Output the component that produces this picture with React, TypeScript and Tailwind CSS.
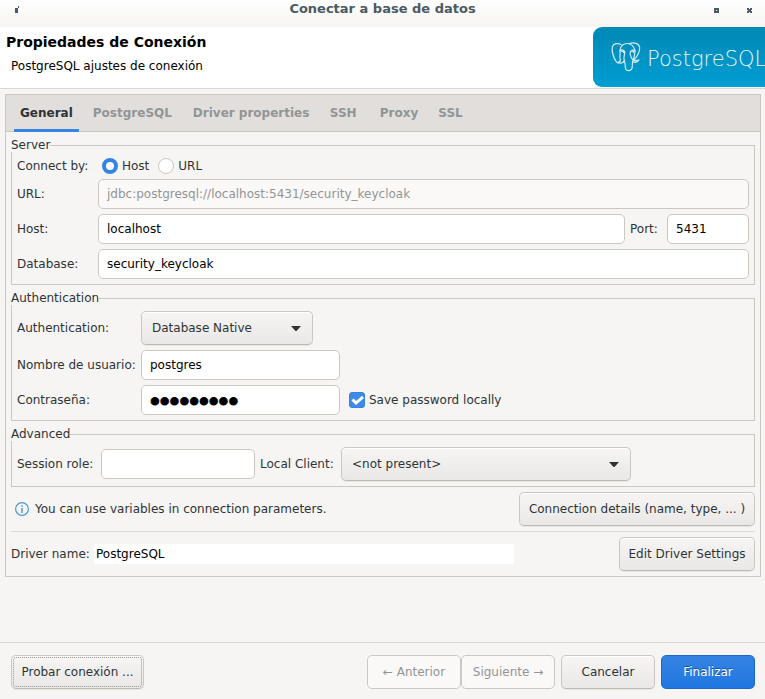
import React from "react";

const inputClass =
  "h-[30px] w-full min-w-0 rounded-[5px] border border-[#cdc7c2] bg-white px-2 text-black outline-none disabled:bg-[#faf9f8] disabled:text-[#929595]";

const buttonClass =
  "h-[34px] shrink-0 rounded-[5px] border border-[#cdc7c2] border-b-[#bfb8b1] bg-linear-to-b from-[#f6f5f4] to-[#e9e8e6] text-center whitespace-nowrap shadow-[inset_0_1px_#ffffff,0_1px_1px_#00000010]";

const disabledButtonClass =
  "h-[34px] w-[94px] rounded-[5px] border border-[#cdc7c2] bg-[#faf9f8] text-[#929595] whitespace-nowrap";

function Group({ title, children }: { title: string; children: React.ReactNode }) {
  return (
    <fieldset className="min-w-0 border border-[#cdc7c2] px-[5px] pb-[5px]">
      <legend className="-ml-[6px] h-[14px] leading-[14px]">{title}</legend>
      {children}
    </fieldset>
  );
}

function Dropdown({ id, value, className }: { id: string; value: string; className: string }) {
  return (
    <div className={"relative " + className}>
      <select id={id} className={buttonClass + " w-full appearance-none pr-8 pl-[10px] text-left"}>
        <option>{value}</option>
      </select>
      <svg className="pointer-events-none absolute top-[15px] right-3 h-[5px] w-[10px]" viewBox="0 0 10 5">
        <path d="M0 0h10L5.500 5h-1z" fill="#2e3436" />
      </svg>
    </div>
  );
}

function Elephant() {
  return (
    <svg
      className="h-[30px] w-[30px] shrink-0"
      viewBox="0 0 30 30"
      fill="none"
      stroke="#d3edf7"
      strokeWidth="1.2"
      strokeLinecap="round"
      strokeLinejoin="round"
    >
      <path d="M10 2.500C7 1 2.500 1 1.300 5C.5 9 2.500 16 5.500 20C6.500 21.500 8 20.800 9.500 18.500" />
      <path d="M9.500 18.500C8 16 9.500 12 9 8.500C9 4 12.500 1.300 16.500 1.500C20.500 1.800 23 5 24 8.500C24.300 11 23 15 22.500 18" />
      <path d="M18 1.700C21 .5 27 .3 28.500 4.500C29.200 8.500 26 14.500 23 18C24 19 26 18.800 28 17.800C27 20 24 21 21.500 19.800" />
      <path d="M9.500 18.500C8.500 20 6.500 20 7 20.500C9 21.800 12.500 21.300 13.300 18.500" />
      <path d="M9.200 8.500C11 7.200 13.500 8 13.700 10C14 13 12 15 13.300 18.500C14.500 21 13.800 24.500 14.800 27C16 29.500 20.500 29.300 21.200 25.500C21.500 23 21 20 22 18C20 15.500 18.500 12 19.500 9.500C20.500 8 22.500 7.800 24 8.500" />
      <path d="M10.800 9.200h1.800v1.200M20.800 9h1.700v1.200" strokeWidth="1.500" />
    </svg>
  );
}

const tabs = [
  { name: "General", size: "" },
  { name: "PostgreSQL", size: "min-w-[92px]" },
  { name: "Driver properties", size: "min-w-[129px]" },
  { name: "SSH", size: "min-w-[42px]" },
  { name: "Proxy", size: "" },
  { name: "SSL", size: "" },
];

export default function App() {
  return (
    <div className="flex min-h-screen flex-col overflow-hidden bg-[#f6f5f4] font-['DejaVu_Sans',sans-serif] text-[12px] leading-[14px] text-[#2e3436]">
      <header className="grid h-[27px] grid-cols-[1fr_auto_1fr] bg-linear-to-b from-[#fefefe] to-[#f5f4f2]">
        <button aria-label="Menú" className="flex pt-[6px] pl-[15px]">
          <svg className="h-[8px] w-[5px]" viewBox="0 0 5 8" fill="#4b5a63">
            <path d="M0 2h3v5H0zM3 0h1v2H3z" />
          </svg>
        </button>
        <h1 className="pt-px text-[13px] leading-4 font-bold text-[#4b5a63]">Conectar a base de datos</h1>
        <div className="flex items-start justify-end gap-7 pt-[8px] pr-[13px]">
          <button aria-label="Maximizar">
            <svg className="h-[5px] w-[5px]" viewBox="0 0 5 5">
              <path d="M0 0h5v5H0zM2 2v1h1V2z" fill="#4b5a63" fillRule="evenodd" />
            </svg>
          </button>
          <button aria-label="Cerrar">
            <svg className="h-[5px] w-[5px]" viewBox="0 0 5 5">
              <path d="M0 0h2v1h1V0h2v2H4v1h1v2H3V4H2v1H0V3h1V2H0z" fill="#4b5a63" />
            </svg>
          </button>
        </div>
      </header>

      <section className="flex h-[62px] justify-between border-b border-[#d9d8d7] bg-white text-black">
        <div className="pt-[7px] pl-[6px]">
          <h2 className="text-[14px] leading-4 font-bold">Propiedades de Conexión</h2>
          <p className="mt-[9px] pl-[5px]">PostgreSQL ajustes de conexión</p>
        </div>
        <div className="flex h-[60px] w-[172px] items-center gap-[6px] overflow-hidden rounded-l-[9px] bg-linear-to-b from-[#0089b6] to-[#009dd2] pl-[18px]">
          <Elephant />
          <span className="pt-1 text-[21px] leading-6 font-extralight text-[#e6f6fb]">PostgreSQL</span>
        </div>
      </section>

      <main className="mt-[5px] mr-1 ml-[5px] border border-[#cdc7c2]">
        <nav role="tablist" className="flex h-[37px] gap-2 border-b border-[#cdc7c2] bg-[#e1dedb] px-2">
          {tabs.map((tab, i) => (
            <button
              key={tab.name}
              role="tab"
              aria-selected={i === 0}
              className={
                "-mb-px border-b-3 px-[6px] pt-[2px] text-left font-bold " +
                tab.size +
                (i === 0 ? " border-[#3584e4] text-[#2e3436]" : " border-transparent text-[#929595]")
              }
            >
              {tab.name}
            </button>
          ))}
        </nav>

        <div className="flex flex-col px-[5px] pt-[6px] pb-[5px]">
          <div className="flex flex-col gap-[6px]">
            <Group title="Server">
              <div className="grid grid-cols-[81px_1fr] items-center gap-y-[5px] pt-[5px]">
                <span>Connect by:</span>
                <div className="flex h-[17px] items-center gap-[9px] pl-1">
                  <label className="flex items-center gap-1">
                    <input
                      type="radio"
                      name="mode"
                      defaultChecked
                      className="h-4 w-4 appearance-none rounded-full border border-[#cdc7c2] bg-white checked:border-[4px] checked:border-[#3584e4]"
                    />
                    Host
                  </label>
                  <label className="flex items-center gap-1">
                    <input
                      type="radio"
                      name="mode"
                      className="h-4 w-4 appearance-none rounded-full border border-[#cdc7c2] bg-white checked:border-[4px] checked:border-[#3584e4]"
                    />
                    URL
                  </label>
                </div>
                <label htmlFor="url">URL:</label>
                <input id="url" disabled className={inputClass} defaultValue="jdbc:postgresql://localhost:5431/security_keycloak" />
                <label htmlFor="host">Host:</label>
                <div className="flex items-center">
                  <input id="host" className={inputClass} defaultValue="localhost" />
                  <label htmlFor="port" className="w-[42px] shrink-0 pl-[5px]">Port:</label>
                  <div className="w-[82px] shrink-0">
                    <input id="port" className={inputClass} defaultValue="5431" />
                  </div>
                </div>
                <label htmlFor="database">Database:</label>
                <input id="database" className={inputClass} defaultValue="security_keycloak" />
              </div>
            </Group>

            <Group title="Authentication">
              <div className="grid grid-cols-[124px_199px_1fr] items-center gap-y-[5px] pt-[6px]">
                <label htmlFor="auth">Authentication:</label>
                <Dropdown id="auth" value="Database Native" className="col-span-2 w-[172px]" />
                <label htmlFor="user" className="whitespace-nowrap">Nombre de usuario:</label>
                <input id="user" className={inputClass} defaultValue="postgres" />
                <span />
                <label htmlFor="password">Contraseña:</label>
                <input
                  id="password"
                  type="password"
                  className={inputClass + " pt-[2px] font-['Liberation_Sans',sans-serif] text-[28px] [-webkit-text-stroke:1px_black]"}
                  defaultValue="contraseñ"
                />
                <label className="flex items-center gap-1 pl-[9px]">
                  <span className="relative h-4 w-4">
                    <input
                      type="checkbox"
                      defaultChecked
                      className="block h-4 w-4 appearance-none rounded-[3px] border border-[#cdc7c2] bg-white checked:border-[#3584e4] checked:bg-[#3f8ae5]"
                    />
                    <svg className="pointer-events-none absolute inset-0 h-4 w-4" viewBox="0 0 16 16">
                      <path d="M3.500 7.500l3.500 3.500L14 4.800" fill="none" stroke="white" strokeWidth="3" />
                    </svg>
                  </span>
                  Save password locally
                </label>
              </div>
            </Group>

            <Group title="Advanced">
              <div className="flex items-center pt-[6px]">
                <label htmlFor="role" className="w-[84px] shrink-0">Session role:</label>
                <div className="w-[154px]">
                  <input id="role" className={inputClass} />
                </div>
                <label htmlFor="client" className="w-[86px] shrink-0 pl-[5px]">Local Client:</label>
                <Dropdown id="client" value="<not present>" className="w-[290px]" />
              </div>
            </Group>
          </div>

          <div className="flex items-center justify-between border-b border-[#d9d8d7] py-[5px]">
            <p className="flex items-center gap-[6px] pl-1">
              <svg className="h-[14px] w-[14px]" viewBox="0 0 14 14" fill="none" stroke="#4a9bd0">
                <circle cx="7" cy="7" r="6.400" strokeWidth="1.200" />
                <path d="M7 6v5M7 3.300v1.400" strokeWidth="1.500" />
              </svg>
              You can use variables in connection parameters.
            </p>
            <button className={buttonClass + " w-[236px]"}>Connection details (name, type, ... )</button>
          </div>

          <div className="flex items-center justify-between pt-[5px]">
            <label htmlFor="driver" className="w-[83px] shrink-0">Driver name:</label>
            <input id="driver" readOnly className="h-5 w-[420px] bg-white px-[2px] text-black" defaultValue="PostgreSQL" />
            <div className="flex flex-1 justify-end">
              <button className={buttonClass + " w-[136px]"}>Edit Driver Settings</button>
            </div>
          </div>
        </div>
      </main>

      <footer className="mt-auto flex items-center justify-between border-t border-[#d9d8d7] pt-3 pr-[10px] pb-[10px] pl-[11px]">
        <button className={buttonClass + " w-[133px] outline-1 -outline-offset-3 outline-dotted outline-[#969696]"}>
          Probar conexión ...
        </button>
        <div className="flex gap-[6px]">
          <div className="flex">
            <button disabled className={disabledButtonClass}>← Anterior</button>
            <button disabled className={disabledButtonClass}>Siguiente →</button>
          </div>
          <button className={buttonClass + " w-[94px]"}>Cancelar</button>
          <button className="h-[34px] w-[94px] rounded-[5px] border border-[#1b6acb] bg-linear-to-b from-[#3584e4] to-[#1f76e1] text-white text-shadow-[0_-1px_#15539e]">
            Finalizar
          </button>
        </div>
      </footer>
    </div>
  );
}
